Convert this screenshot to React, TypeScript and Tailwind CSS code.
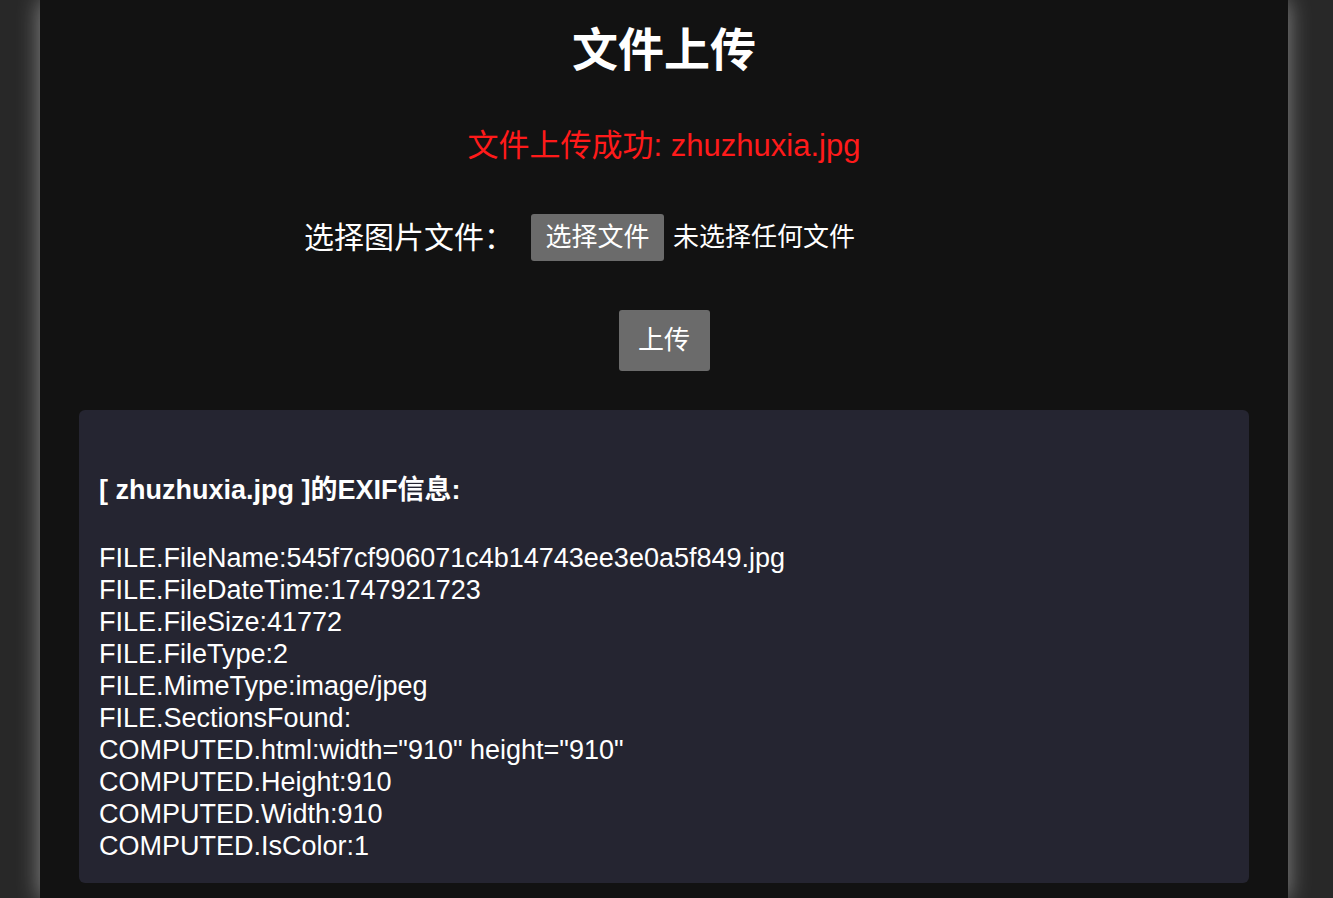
const LINES = [
  "FILE.FileName:545f7cf906071c4b14743ee3e0a5f849.jpg",
  "FILE.FileDateTime:1747921723",
  "FILE.FileSize:41772",
  "FILE.FileType:2",
  "FILE.MimeType:image/jpeg",
  "FILE.SectionsFound:",
  'COMPUTED.html:width="910" height="910"',
  "COMPUTED.Height:910",
  "COMPUTED.Width:910",
  "COMPUTED.IsColor:1",
]

export default function App() {
  return (
    <div
      className="min-h-[898px] bg-[#282828] pl-[40px] pr-[45px]"
      style={{ fontFamily: '"Liberation Sans", Arial, "Noto Sans CJK SC", sans-serif' }}
    >
      <div className="min-h-[898px] bg-[#121212] px-[39px] pb-[16px] shadow-[0_0_22px_rgba(255,255,255,0.45)]">
        <h1 className="pt-[22px] text-center text-[46px] font-bold leading-[56px] text-white">文件上传</h1>

        <p className="mt-[48px] text-center text-[31px] leading-[40px] text-[#ff1a1a]">
          文件上传成功: zhuzhuxia.jpg
        </p>

        <div className="mt-[48px] flex items-center pl-[225px]">
          <span className="text-[30px] leading-[40px] text-white">选择图片文件：</span>
          <label className="ml-[17px] flex items-center">
            <span className="flex h-[47px] w-[133px] items-center justify-center rounded-[3px] bg-[#6b6b6b] text-[26px] text-white">
              选择文件
            </span>
            <span className="ml-[9px] text-[26px] text-white">未选择任何文件</span>
          </label>
        </div>

        <div className="mt-[49px] flex justify-center">
          <button className="h-[61px] w-[91px] rounded-[3px] bg-[#6b6b6b] text-[26px] text-white">上传</button>
        </div>

        <div className="mt-[39px] rounded-[6px] bg-[#252531] px-[20px] pb-[21px] pt-[64px] text-white">
          <p className="text-[27px] font-bold leading-[32px]">[ zhuzhuxia.jpg ]的EXIF信息:</p>
          <div className="mt-[36px] text-[27px] leading-[32px]">
            {LINES.map((l) => (
              <div key={l}>{l}</div>
            ))}
          </div>
        </div>
      </div>
    </div>
  )
}
